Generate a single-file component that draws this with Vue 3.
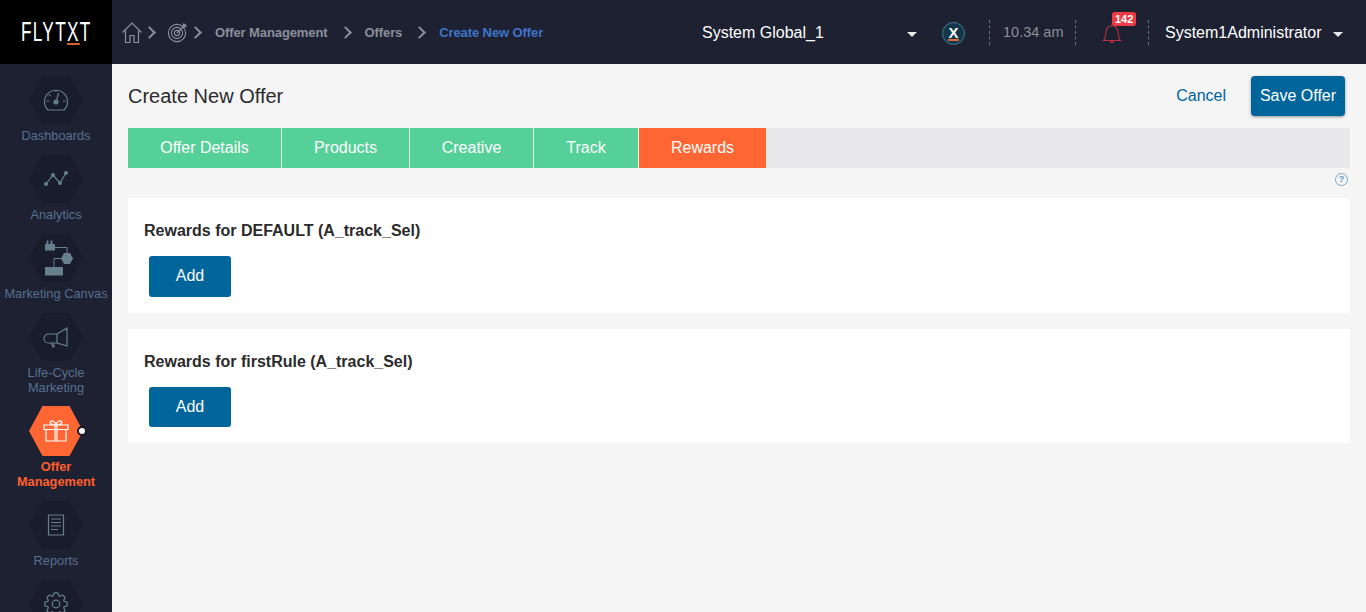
<script setup>
const tabs = [
  { name: 'Offer Details', width: 154 },
  { name: 'Products', width: 128 },
  { name: 'Creative', width: 124 },
  { name: 'Track', width: 105 },
  { name: 'Rewards', width: 127, active: true }
]
const rules = ['DEFAULT', 'firstRule']

// settings gear outline, 8 teeth
const gearPath = () => {
  const pts = []
  for (let i = 0; i < 8; i++) {
    const a = (i * Math.PI) / 4
    const step = Math.PI / 14
    const at = (r, t) => `${(12 + r * Math.cos(t)).toFixed(1)} ${(12 + r * Math.sin(t)).toFixed(1)}`
    pts.push(at(8.6, a - step * 1.5), at(11.2, a - step * 0.7), at(11.2, a + step * 0.7), at(8.6, a + step * 1.5))
  }
  return 'M' + pts.join('L') + 'z'
}
</script>

<template>
  <div class="app">
    <header class="topbar">
      <div class="logo"><span class="logo-text">FLYT<span class="logo-x">X</span>T</span></div>
      <nav class="crumbs">
        <svg class="ico-home" width="20" height="21" viewBox="0 0 20 21" fill="none" stroke="#8b909c" stroke-width="1.2">
          <path d="M.5 10.500 10 1l9.500 9.500M3.500 8.500v12h4.500v-7h4v7h4.500v-12" />
        </svg>
        <span class="chev first"></span>
        <svg class="ico-target" width="22" height="22" viewBox="0 0 22 22" fill="none" stroke="#8b909c" stroke-width="1.1">
          <circle cx="10" cy="12" r="8.6" />
          <circle cx="10" cy="12" r="5.6" />
          <circle cx="10" cy="12" r="2.6" />
          <path d="M10 12 19 3M16.5 2.500v3h3" stroke-width="1.4" />
        </svg>
        <span class="chev second"></span>
        <span class="crumb">Offer Management</span>
        <span class="chev"></span>
        <span class="crumb">Offers</span>
        <span class="chev"></span>
        <span class="crumb current">Create New Offer</span>
      </nav>
      <div class="system">
        <span>System Global_1</span>
        <span class="caret"></span>
      </div>
      <span class="x-badge"><span class="x-letter">X</span></span>
      <span class="sep sep-a"></span>
      <span class="time">10.34 am</span>
      <span class="sep"></span>
      <div class="bell">
        <svg width="20" height="24" viewBox="0 0 20 24" fill="none" stroke="#b5303c" stroke-width="1.2">
          <path d="M1.500 20.500c1.700-2 2.200-4 2.400-8 .2-4 2.500-6.500 6.100-6.500s5.900 2.500 6.100 6.500c.2 4 .7 6 2.400 8z" />
          <path d="M10 3v2.500M8.800 21v1.500h2.400V21" />
        </svg>
        <span class="count">142</span>
      </div>
      <span class="sep sep-b"></span>
      <div class="user">
        <span>System1Administrator</span>
        <span class="caret"></span>
      </div>
    </header>

    <div class="body">
      <aside class="sidebar">
        <div class="side-item">
          <div class="hex">
            <svg width="26" height="26" viewBox="0 0 26 26" fill="none" stroke="#66808e" stroke-width="1.2">
              <path d="M5 23a11.500 11.500 0 1 1 16 0z" />
              <circle cx="13" cy="15" r="2" fill="#66808e" />
              <path d="M13.500 14 15.500 6M3.500 14h2.500M20 14h2.500M6 7.500l1.500 1.500M13 3.500V5" />
            </svg>
          </div>
          <span class="side-label">Dashboards</span>
        </div>
        <div class="side-item">
          <div class="hex">
            <svg width="26" height="26" viewBox="0 0 26 26" fill="none" stroke="#66808e" stroke-width="1.2">
              <path d="M3 18 10 9l7 8 6-10" />
              <g fill="#66808e" stroke="none">
                <circle cx="3" cy="18" r="2" />
                <circle cx="10" cy="9" r="2" />
                <circle cx="17" cy="17" r="2" />
                <circle cx="23" cy="7" r="2" />
              </g>
            </svg>
          </div>
          <span class="side-label">Analytics</span>
        </div>
        <div class="side-item">
          <div class="hex">
            <svg class="canvas-ico" width="30" height="37" viewBox="0 0 30 37" fill="none" stroke="#66808e" stroke-width="1">
              <path d="M11 8.500h12V14M17 19.500h-7V29" />
              <g fill="#66808e" stroke="none">
                <path d="M1 5h1.500V1.500h2V5h2V1.500h2V5H11v6.500H1z" />
                <path d="M17 19.500l3-5.500h6l3 5.500-3 5.500h-6z" />
                <rect x="1" y="28" width="18" height="8.500" />
              </g>
            </svg>
          </div>
          <span class="side-label">Marketing Canvas</span>
        </div>
        <div class="side-item">
          <div class="hex">
            <svg width="26" height="26" viewBox="0 0 26 26" fill="none" stroke="#66808e" stroke-width="1.2">
              <path d="M14 10 24 4v18l-10-3zM14 10H5.500a4.500 4.500 0 0 0 0 9H14M8 19l2 4 1.200-.8-.7-3.200" />
            </svg>
          </div>
          <span class="side-label">Life-Cycle<br>Marketing</span>
        </div>
        <div class="side-item active">
          <div class="hex">
            <svg width="26" height="22" viewBox="0 0 26 22" fill="none" stroke="#fff" stroke-width="1.2">
              <path d="M1 5h24v4.500H1zM3 9.500V21h20V9.500M12 5v16M14 5v16M13 5C9 5 6.500 3.500 7.500 1.800S12 1 13 5c1-4 4.500-5 5.500-3.200S17 5 13 5z" />
            </svg>
            <span class="dot"></span>
          </div>
          <span class="side-label">Offer<br>Management</span>
        </div>
        <div class="side-item">
          <div class="hex">
            <svg width="18" height="22" viewBox="0 0 18 22" fill="none" stroke="#66808e" stroke-width="1.2">
              <path d="M1.500 1h15v20h-15zM4 5h10M4 8.500h10M4 12h10M4 15.500h7" />
            </svg>
          </div>
          <span class="side-label">Reports</span>
        </div>
        <div class="side-item">
          <div class="hex">
            <svg width="24" height="24" viewBox="0 0 24 24" fill="none" stroke="#66808e" stroke-width="1.2">
              <circle cx="12" cy="12" r="3.8" />
              <path :d="gearPath()" />
            </svg>
          </div>
        </div>
      </aside>

      <main class="content">
        <div class="title-row">
          <h1>Create New Offer</h1>
          <div class="actions">
            <a class="cancel">Cancel</a>
            <button class="save">Save Offer</button>
          </div>
        </div>
        <div class="tabs">
          <div
            v-for="tab in tabs"
            :key="tab.name"
            class="tab"
            :class="{ on: tab.active }"
            :style="{ width: tab.width + 'px' }"
          >{{ tab.name }}</div>
        </div>
        <div class="help-row"><span class="help">?</span></div>
        <section v-for="rule in rules" :key="rule" class="card">
          <h2>Rewards for {{ rule }} (A_track_Sel)</h2>
          <button class="add">Add</button>
        </section>
      </main>
    </div>
  </div>
</template>

<style scoped>
.app {
  height: 612px;
  overflow: hidden;
  background: #f5f5f5;
  font-family: "Liberation Sans", Arial, sans-serif;
}
.topbar {
  height: 64px;
  display: flex;
  align-items: center;
  background: #1e2132;
}
.logo {
  width: 112px;
  height: 64px;
  flex: none;
  display: flex;
  align-items: center;
  justify-content: center;
  background: #000;
  color: #fff;
}
.logo-text {
  font-size: 27px;
  line-height: 27px;
  letter-spacing: 2px;
  white-space: nowrap;
  transform: scaleX(0.64);
}
.logo-x {
  display: inline-block;
  line-height: 22px;
  border-bottom: 2px solid #d9602c;
}
.crumbs {
  width: 588px;
  flex: none;
  display: flex;
  align-items: center;
  padding-left: 10px;
  box-sizing: border-box;
}
.chev {
  width: 7px;
  height: 7px;
  margin: 0 15px 0 13px;
  border-top: 2px solid #8b8f99;
  border-right: 2px solid #8b8f99;
  transform: rotate(45deg);
}
.chev.first {
  margin: 0 13px 0 3px;
}
.chev.second {
  margin: 0 15px 0 2px;
}
.crumb {
  color: #8b8f99;
  font-size: 13px;
  font-weight: 700;
  letter-spacing: -0.1px;
}
.crumb.current {
  color: #3f74c8;
}
.system {
  width: 217px;
  flex: none;
  padding: 2px 0 0 2px;
  display: flex;
  align-items: center;
  justify-content: space-between;
  box-sizing: border-box;
  color: #fff;
  font-size: 16px;
}
.caret {
  width: 0;
  height: 0;
  border-left: 5px solid transparent;
  border-right: 5px solid transparent;
  border-top: 5px solid #e8e8e8;
  margin-top: 3px;
}
.x-badge {
  width: 23px;
  height: 23px;
  margin: 2px 0 0 25px;
  flex: none;
  display: flex;
  align-items: center;
  justify-content: center;
  border-radius: 50%;
  border: 1px solid #3f7f8c;
  box-sizing: border-box;
  background: #14364a;
}
.x-letter {
  color: #fff;
  font-size: 15px;
  font-weight: 700;
  line-height: 13px;
  border-bottom: 2px solid #e0683a;
}
.sep {
  height: 25px;
  flex: none;
  border-left: 1px dashed #6d7079;
}
.sep-a {
  margin-left: 24px;
}
.time {
  width: 85px;
  flex: none;
  padding-left: 13px;
  box-sizing: border-box;
  color: #8b8f99;
  font-size: 14.5px;
}
.bell {
  position: relative;
  width: 72px;
  height: 24px;
  flex: none;
  padding-left: 26px;
  box-sizing: border-box;
}
.count {
  position: absolute;
  left: 36px;
  top: -8px;
  padding: 0 3px;
  height: 14px;
  border-radius: 3px;
  background: #ef3b44;
  color: #fff;
  font-size: 11px;
  font-weight: 700;
  line-height: 14px;
}
.user {
  display: flex;
  align-items: center;
  gap: 11px;
  padding: 2px 0 0 16px;
  color: #fff;
  font-size: 16px;
}
.body {
  display: flex;
  height: 548px;
}
.sidebar {
  width: 112px;
  flex: none;
  display: flex;
  flex-direction: column;
  align-items: center;
  padding-top: 12px;
  box-sizing: border-box;
  background: #1e2132;
  overflow: hidden;
}
.side-item {
  display: flex;
  flex-direction: column;
  align-items: center;
  width: 112px;
  margin-bottom: 12px;
  flex: none;
}
.side-item:nth-child(4) {
  margin-bottom: 11px;
}
.hex {
  position: relative;
  width: 54px;
  height: 48px;
  display: flex;
  align-items: center;
  justify-content: center;
  background: #191c2a;
  clip-path: polygon(25% 0, 75% 0, 100% 50%, 75% 100%, 25% 100%, 0 50%);
}
.canvas-ico {
  margin-left: 5px;
  margin-top: -1px;
}
.active .hex {
  height: 50px;
  background: transparent;
  clip-path: none;
}
.active .hex::before {
  content: "";
  position: absolute;
  inset: 0;
  background: #ff6633;
  clip-path: polygon(25% 0, 75% 0, 100% 50%, 75% 100%, 25% 100%, 0 50%);
}
.active .hex svg {
  position: relative;
}
.dot {
  position: absolute;
  left: 48px;
  top: 20px;
  width: 6px;
  height: 6px;
  border-radius: 50%;
  background: #fff;
  border: 2px solid #161926;
}
.side-label {
  margin-top: 4px;
  color: #55708e;
  font-size: 12.8px;
  line-height: 15px;
  text-align: center;
  white-space: nowrap;
}
.active .side-label {
  margin-top: 3px;
  color: #ff5f2e;
  font-weight: 700;
}
.content {
  flex: 1;
  padding: 12px 16px 0;
  min-width: 0;
}
.title-row {
  height: 40px;
  display: flex;
  align-items: center;
  justify-content: space-between;
  margin-right: 5px;
}
h1 {
  margin: 0;
  color: #2b2b2b;
  font-size: 20px;
  font-weight: 400;
}
.actions {
  display: flex;
  align-items: center;
  gap: 25px;
}
.cancel {
  color: #00649c;
  font-size: 16px;
}
.save {
  width: 94px;
  height: 40px;
  border: 0;
  border-radius: 4px;
  background: #00659b;
  color: #fff;
  font: 16px "Liberation Sans", Arial, sans-serif;
  box-shadow: 0 1px 3px rgba(0, 0, 0, 0.4);
}
.tabs {
  display: flex;
  height: 40px;
  margin-top: 12px;
  background: #e8e8ea;
}
.tab {
  height: 40px;
  display: flex;
  align-items: center;
  justify-content: center;
  box-sizing: border-box;
  border-right: 1px solid #e8f5ef;
  background: #55d098;
  color: #fff;
  font-size: 16px;
}
.tab.on {
  border-right: 0;
  background: #ff6633;
}
.help-row {
  height: 30px;
  display: flex;
  justify-content: flex-end;
  padding: 5px 2px 0 0;
  box-sizing: border-box;
}
.help {
  width: 13px;
  height: 13px;
  box-sizing: border-box;
  border: 1px solid #7aa8c7;
  border-radius: 50%;
  color: #5f96bb;
  font-size: 9px;
  font-weight: 700;
  line-height: 11px;
  text-align: center;
}
.card {
  height: 115px;
  margin-bottom: 16px;
  padding: 24px 16px 0;
  box-sizing: border-box;
  background: #fff;
}
.card + .card {
  height: 114px;
}
h2 {
  margin: 0;
  color: #2b2b2b;
  font-size: 16px;
  font-weight: 700;
  line-height: 18px;
}
.add {
  display: block;
  width: 82px;
  height: 41px;
  margin: 16px 0 0 5px;
  padding-bottom: 3px;
  border: 0;
  border-radius: 3px;
  background: #00659b;
  color: #fff;
  font: 16px "Liberation Sans", Arial, sans-serif;
}
.card + .card .add {
  height: 40px;
  padding-bottom: 2px;
}
</style>
